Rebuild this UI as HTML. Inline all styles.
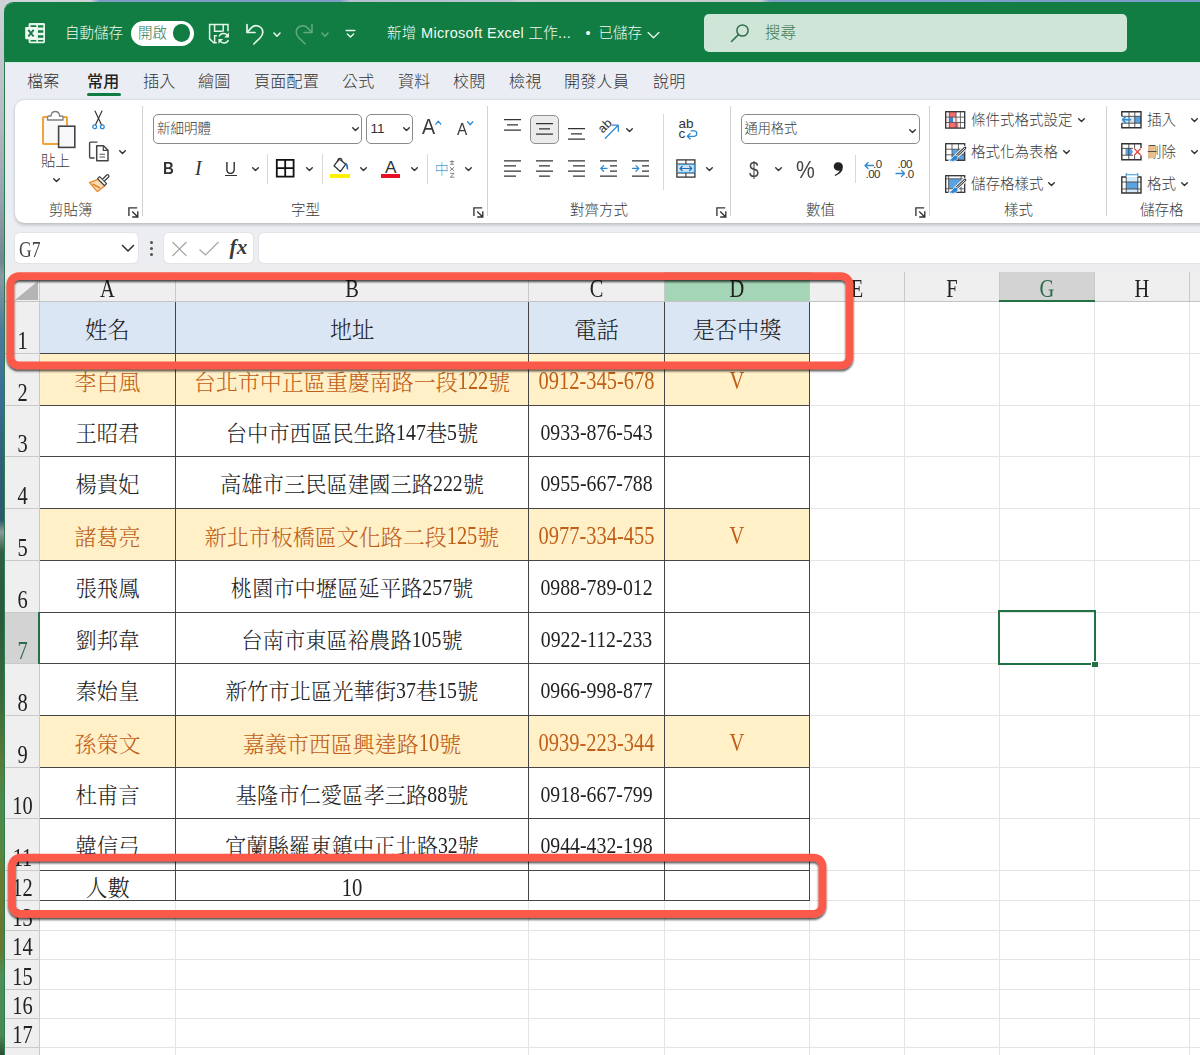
<!DOCTYPE html>
<html lang="zh-Hant"><head><meta charset="utf-8"><title>Excel</title>
<style>
*{box-sizing:border-box;margin:0;padding:0}
html,body{width:1200px;height:1055px;overflow:hidden}
body{position:relative;font-family:"Liberation Sans","Noto Sans CJK TC","Noto Sans CJK SC",sans-serif;color:#333;background:#6d8fb5}
.abs{position:absolute}
#deskL{position:absolute;left:0;top:0;width:6px;height:1055px;background:linear-gradient(180deg,#d0d4d9 0px,#b4bbc2 120px,#97a2aa 200px,#74858e 262px,#8a9aa5 275px,#4a7a9c 330px,#3a6e96 400px,#2f6078 460px,#2a5a6a 520px,#8d9a9a 532px,#2f5f40 552px,#2a5a3c 620px,#3b6b3a 700px,#5a7a35 760px,#4a8a4a 800px,#55873f 850px,#6b7a2f 880px,#66782f 950px,#4f8f55 975px,#4a8a50 1035px,#2d4a35 1055px)}
#deskT{position:absolute;left:0;top:0;width:1200px;height:8px;background:linear-gradient(90deg,#d2d5da 0px,#cfd3d8 90px,#7c9cc5 100px,#7d9dc6 340px,#b5c0d0 350px,#bcc5d0 510px,#cdd0d2 520px,#c9cdd0 760px,#7fa0c8 770px,#7a9cc8 1200px)}
#win{position:absolute;left:4px;top:3px;width:1210px;height:1070px;background:#eaedf3;border-top-left-radius:9px;overflow:hidden}
#title{position:absolute;left:0;top:0;width:100%;height:60px;background:#117d42;border-bottom:1px solid #cfeede}
.tt{position:absolute;color:#f0faf3;font-size:14.5px;line-height:20px;white-space:nowrap;font-weight:300}
.mi{position:absolute;top:67px;font-size:16px;line-height:24px;color:#333;white-space:nowrap;font-weight:300;letter-spacing:.3px}
#ribbon{position:absolute;left:11px;top:97px;width:1210px;height:122.5px;background:#fff;border-radius:9px;box-shadow:0 1.5px 3.5px rgba(0,0,0,.2),0 0 1px rgba(0,0,0,.12)}
.rl{position:absolute;font-size:14.5px;line-height:20px;color:#3a3a3a;white-space:nowrap;font-weight:300}
.gsep{position:absolute;top:6px;width:1px;height:110px;background:#d2d2d2}
.ssep{position:absolute;width:1px;background:#d8d8d8}
.box{position:absolute;border:1px solid #8a8a8a;border-radius:5px;background:#fff}
.fb{position:absolute;top:230px;height:30px;background:#fff;border-radius:5px;box-shadow:0 0 0 1px #e3e4e7}
#sheet{position:absolute;left:1px;top:269px;width:1200px;height:800px;background:#fff;font-family:"Liberation Serif","Noto Serif CJK TC","Noto Serif CJK SC",serif}
.ch{position:absolute;top:0;height:29px;background:#efefef;border-right:1px solid #c9c9c9;font-size:22px;line-height:36px;text-align:center;color:#222}
.rh{position:absolute;left:0;width:34px;background:#efefef;border-bottom:1px solid #c9c9c9;font-size:22px;color:#222;text-align:center}
.rh>span{position:absolute;left:1px;right:0;bottom:-2px;line-height:26px}
.c{position:absolute;font-size:22px;text-align:center;white-space:nowrap;color:#222;font-weight:300}
.d{display:inline-block;font-size:.93em;transform:scaleY(1.2);transform-origin:50% 72%;font-family:'Liberation Serif',serif}
.gl{position:absolute;background:#e1e1e1}
.bl{position:absolute;background:#4a4a4a}
svg{position:absolute;overflow:visible}
</style></head>
<body>
<div id="deskT"></div><div id="deskL"></div>
<div class="abs" style="left:4px;top:2px;width:1200px;height:14px;background:#117d42;border-top-left-radius:9px"></div>
<div id="win">
<div id="title">
<svg style="left:19.5px;top:19px" width="22" height="22" viewBox="0 0 22 22"><rect x="4.6" y="1.1" width="16.4" height="20.1" rx="1.4" fill="#e4f5ea"/><path d="M6.6 3.2H12.3V5H6.6ZM14 3.2H19.3V5.6H14ZM14 8.2H19.3V10.7H14ZM14 13.2H19.3V15.7H14ZM6.6 17.9H12.3V19.5H6.6ZM14 18.1H19.3V19.5H14Z" fill="#117d42"/><rect x="1.2" y="5" width="11.4" height="12.2" rx="0.9" fill="#f2faf5"/><path d="M4.3 7.9L9.6 14.5M9.6 7.9L4.3 14.5" stroke="#187a46" stroke-width="1.9" fill="none"/></svg>
<div class="tt" style="left:61px;top:20px">自動儲存</div>
<div class="abs" style="left:126.5px;top:17.5px;width:63px;height:25px;border-radius:12.5px;background:#fff"></div>
<div class="tt" style="left:134px;top:20px;color:#2f7a52;font-size:14.5px">開啟</div>
<div class="abs" style="left:169px;top:21.4px;width:17.2px;height:17.2px;border-radius:50%;background:#117d42"></div>
<svg style="left:204px;top:20px" width="22" height="22" viewBox="0 0 22 22" fill="none" stroke="#e4f5ea" stroke-width="1.5" stroke-linejoin="miter" stroke-linecap="butt"><path d="M8.8 19.7H5.8L1.6 15.8V1.6H20V8.2"/><path d="M6.6 1.6V8.3H15.2V1.6"/><path d="M8.9 12.8H6.6V19.7"/><circle cx="15.7" cy="15.2" r="6.6" fill="#117d42" stroke="none"/><path d="M11 13.6A4.9 4.9 0 0 1 19.6 12.6M20.4 16.9A4.9 4.9 0 0 1 11.8 17.9" stroke-width="1.4"/><path d="M21 9.6V14.4H16.2ZM10.4 20.8V16H15.2Z" fill="#e4f5ea" stroke="none"/></svg>
<svg style="left:241px;top:19px" width="20" height="24" viewBox="0 0 20 24" fill="none" stroke="#e4f5ea" stroke-width="1.7" stroke-linejoin="round" stroke-linecap="round"><path d="M2 2.5V10.5H10"/><path d="M2.3 10.2L6.5 5.7A6.6 6.6 0 0 1 17.8 10.3Q17.8 13.2 15 16L8.8 22"/></svg>
<svg style="left:268.5px;top:28.5px" width="8" height="6" viewBox="0 0 8 6"><path d="M1 1L4 4.2L7 1" fill="none" stroke="#e4f5ea" stroke-width="1.6" stroke-linecap="round" stroke-linejoin="round"/></svg>
<svg style="left:290px;top:19px;opacity:.38" width="20" height="24" viewBox="0 0 20 24" fill="none" stroke="#e4f5ea" stroke-width="1.5" stroke-linejoin="round" stroke-linecap="round"><path d="M18 2.5V10.5H10"/><path d="M17.7 10.2L13.5 5.7A6.6 6.6 0 0 0 2.2 10.3Q2.2 13.2 5 16L11.2 22"/></svg>
<svg style="left:316.5px;top:28.5px;opacity:.38" width="8" height="6" viewBox="0 0 8 6"><path d="M1 1L4 4.2L7 1" fill="none" stroke="#e4f5ea" stroke-width="1.6" stroke-linecap="round" stroke-linejoin="round"/></svg>
<svg style="left:341px;top:25px" width="11" height="11" viewBox="0 0 11 11" fill="none" stroke="#e4f5ea" stroke-width="1.5" stroke-linecap="round" stroke-linejoin="round"><path d="M1.2 2.4H9.8M2.4 6L5.5 9L8.6 6"/></svg>
<div class="tt" style="left:383px;top:20px;letter-spacing:.32px">新增 Microsoft Excel 工作...</div>
<div class="tt" style="left:581.5px;top:20px">•</div><div class="tt" style="left:594.5px;top:20px">已儲存</div>
<svg style="left:643px;top:27.5px" width="13" height="9" viewBox="0 0 14 9"><path d="M1.2 1.2L7 7L12.8 1.2" fill="none" stroke="#e4f5ea" stroke-width="1.5" stroke-linecap="round" stroke-linejoin="round"/></svg>
<div class="abs" style="left:700px;top:11px;width:423px;height:38px;border-radius:5px;background:#cfe5d7"></div>
<svg style="left:726px;top:20px" width="20" height="20" viewBox="0 0 20 20" fill="none" stroke="#2f6f4b" stroke-width="1.5" stroke-linecap="round"><circle cx="12.5" cy="7.5" r="5.6"/><path d="M8.4 11.6L1.5 18.5"/></svg>
<div class="tt" style="left:761px;top:20px;color:#3b7a55;font-size:15.5px">搜尋</div>
</div>
<div class="mi" style="left:23px;">檔案</div>
<div class="mi" style="left:83px;font-weight:500;color:#222;">常用</div>
<div class="mi" style="left:139px;">插入</div>
<div class="mi" style="left:194px;">繪圖</div>
<div class="mi" style="left:250px;">頁面配置</div>
<div class="mi" style="left:338px;">公式</div>
<div class="mi" style="left:394px;">資料</div>
<div class="mi" style="left:449px;">校閱</div>
<div class="mi" style="left:505px;">檢視</div>
<div class="mi" style="left:560px;">開發人員</div>
<div class="mi" style="left:649px;">說明</div>
<div class="abs" style="left:83px;top:90px;width:34px;height:3px;border-radius:2px;background:#107c41"></div>
<div class="abs" style="left:1px;top:215px;width:1210px;height:54px;background:linear-gradient(180deg,#eceef1 0,#ecedf0 45px,#eeeeef 54px)"></div>
<div id="ribbon">
<svg style="left:26px;top:10px" width="36" height="40" viewBox="0 0 36 40" ><path d="M7 7H2.9Q2 7 2 7.9V34Q2 34.9 2.9 34.9H17V16H26V7.9Q26 7 25.1 7H21" fill="#fafafa" stroke="none"/>
<path d="M7 7H2.9Q2 7 2 7.9V33.1Q2 34 2.9 34H17" fill="none" stroke="#f2a33a" stroke-width="2"/><path d="M21 7H25.1Q26 7 26 7.9V15.5" fill="none" stroke="#f2a33a" stroke-width="2"/>
<path d="M6.6 10V7.2Q6.6 6 7.8 6H10Q10.4 1.5 14.3 1.5Q18.2 1.5 18.6 6H20.8Q22 6 22 7.2V10Z" fill="#fff" stroke="#808080" stroke-width="1.3" stroke-linejoin="round"/>
<rect x="17.6" y="16.2" width="16.2" height="21.2" fill="#f8f8fb" stroke="#444" stroke-width="1.6"/></svg>
<div class="rl" style="left:26px;top:51px;">貼上</div>
<svg style="left:38.3px;top:78px" width="7" height="4.5" viewBox="0 0 7 4.5"><path d="M0.7 0.7L3.5 3.5L6.3 0.7" fill="none" stroke="#333" stroke-width="1.4" stroke-linecap="round" stroke-linejoin="round"/></svg>
<svg style="left:76px;top:10px" width="15" height="22" viewBox="0 0 15 22" ><path d="M4 1L10.6 15M11 1L4.4 15" fill="none" stroke="#333" stroke-width="1.15" stroke-linecap="round"/><circle cx="3.7" cy="16.7" r="1.9" fill="none" stroke="#2e8bd8" stroke-width="1.3"/><circle cx="11.3" cy="16.7" r="1.9" fill="none" stroke="#2e8bd8" stroke-width="1.3"/></svg>
<svg style="left:73px;top:41px" width="22" height="22" viewBox="0 0 22 22" ><path d="M6.5 17H2.5Q1.6 17 1.6 16.1V2Q1.6 1.1 2.5 1.1H9.5" fill="none" stroke="#444" stroke-width="1.4" stroke-linejoin="round"/><path d="M8.7 4.7H15.5L20 9.2V19.8H8.7Z" fill="#fff" stroke="#444" stroke-width="1.5" stroke-linejoin="round"/><path d="M15.3 5V9.4H19.8" fill="none" stroke="#444" stroke-width="1.2"/><path d="M11.5 13.3H17M11.5 16H17" stroke="#555" stroke-width="1.1"/></svg>
<svg style="left:103.5px;top:49.69999999999999px" width="7" height="4.5" viewBox="0 0 7 4.5"><path d="M0.7 0.7L3.5 3.5L6.3 0.7" fill="none" stroke="#333" stroke-width="1.4" stroke-linecap="round" stroke-linejoin="round"/></svg>
<svg style="left:73px;top:72px" width="22" height="22" viewBox="0 0 22 22" ><path d="M1.5 10.6L10 7.4L16.6 14L9.4 19.6Z" fill="#fbdcb8" stroke="#e8872b" stroke-width="1.3" stroke-linejoin="round"/><path d="M4.5 12L12 16" stroke="#e8872b" stroke-width="1.6"/><path d="M9.6 6.6L11.6 4.6L18.6 11.6L16.6 13.6Z" fill="#fff" stroke="#444" stroke-width="1.3" stroke-linejoin="round"/><path d="M14.6 7.2L18.4 3.2Q19.6 2.1 20.6 3.1Q21.5 4.1 20.4 5.2L16.4 9" fill="#fff" stroke="#444" stroke-width="1.3" stroke-linejoin="round"/></svg>
<div class="rl" style="left:34px;top:100px;">剪貼簿</div>
<svg style="left:112.5px;top:106.5px" width="11" height="11" viewBox="0 0 11 11" ><path d="M0.9 9V0.9H9.2M4.2 4.5L9.8 10M9.8 4.3V10H4.2" fill="none" stroke="#333" stroke-width="1.35" stroke-linejoin="miter"/></svg>
<div class="gsep" style="left:127px"></div>
<div class="box" style="left:138px;top:14px;width:209px;height:30px"></div>
<div class="rl" style="left:142px;top:19px;font-size:13.5px;color:#333">新細明體</div>
<svg style="left:337px;top:27.299999999999997px" width="7" height="4.5" viewBox="0 0 7 4.5"><path d="M0.7 0.7L3.5 3.5L6.3 0.7" fill="none" stroke="#333" stroke-width="1.4" stroke-linecap="round" stroke-linejoin="round"/></svg>
<div class="box" style="left:351px;top:14px;width:47px;height:30px"></div>
<div class="rl" style="left:355.5px;top:18.5px;font-size:13.5px;color:#333;font-weight:400">11</div>
<svg style="left:387.5px;top:27.299999999999997px" width="7" height="4.5" viewBox="0 0 7 4.5"><path d="M0.7 0.7L3.5 3.5L6.3 0.7" fill="none" stroke="#333" stroke-width="1.4" stroke-linecap="round" stroke-linejoin="round"/></svg>
<div class="rl" style="left:407.3px;top:12.299999999999997px;font-size:21.2px;line-height:30px;color:#3a3a3a;font-weight:400;transform:scaleX(.93);transform-origin:0 0">A</div>
<svg style="left:420px;top:20px" width="7" height="5" viewBox="0 0 7 5" ><path d="M0.8 4.2L3.3 1.2L5.8 4.2" fill="none" stroke="#2e8bd0" stroke-width="1.3" stroke-linecap="round" stroke-linejoin="round"/></svg>
<div class="rl" style="left:441.6px;top:16.299999999999997px;font-size:16.2px;line-height:26px;color:#3a3a3a;font-weight:400;transform:scaleX(.95);transform-origin:0 0">A</div>
<svg style="left:451.7px;top:20.5px" width="7" height="5" viewBox="0 0 7 5" ><path d="M0.6 0.8L3.2 3.8L5.8 0.8" fill="none" stroke="#2e8bd0" stroke-width="1.3" stroke-linecap="round" stroke-linejoin="round"/></svg>
<div class="rl" style="left:148px;top:56.599999999999994px;font-size:16.7px;line-height:24px;font-weight:700;color:#333;transform:scaleX(.9);transform-origin:0 0">B</div>
<div class="rl" style="left:180px;top:56px;font-size:17px;line-height:24px;font-style:italic;color:#333;font-family:'Liberation Serif',serif;font-size:20px">I</div>
<div class="rl" style="left:210.4px;top:56.599999999999994px;font-size:16.7px;line-height:24px;color:#333;font-weight:400;transform:scaleX(.92);transform-origin:0 0">U</div>
<div class="abs" style="left:210.3px;top:74.6px;width:11.4px;height:1.3px;background:#333"></div>
<svg style="left:236.5px;top:67.30000000000001px" width="7" height="4.5" viewBox="0 0 7 4.5"><path d="M0.7 0.7L3.5 3.5L6.3 0.7" fill="none" stroke="#333" stroke-width="1.4" stroke-linecap="round" stroke-linejoin="round"/></svg>
<div class="ssep" style="left:252px;top:54px;height:30px"></div>
<svg style="left:260px;top:58px" width="20" height="20" viewBox="0 0 20 20" ><path d="M1.8 1.8H18.6V18.6H1.8ZM10.2 1.8V18.6M1.8 10.2H18.6" fill="none" stroke="#111" stroke-width="1.8"/></svg>
<svg style="left:291px;top:67.30000000000001px" width="7" height="4.5" viewBox="0 0 7 4.5"><path d="M0.7 0.7L3.5 3.5L6.3 0.7" fill="none" stroke="#333" stroke-width="1.4" stroke-linecap="round" stroke-linejoin="round"/></svg>
<div class="ssep" style="left:307px;top:54px;height:30px"></div>
<svg style="left:316px;top:57px" width="20" height="16" viewBox="0 0 20 16" ><path d="M7.7 2.5L3 8.8L9.3 14.6L14.6 7.3L10 3.2Z" fill="#fff" stroke="#333" stroke-width="1.3" stroke-linejoin="round"/><path d="M7 4.5Q6.5 1.2 9 1.2Q11 1.2 11 4" fill="none" stroke="#333" stroke-width="1.1"/><path d="M14.3 5.2Q17.6 6.5 17.2 13Q15 12 15.2 9Q15.2 7 14.3 5.2Z" fill="#1e6fbf"/></svg>
<div class="abs" style="left:315px;top:73.80000000000001px;width:19.7px;height:4.4px;background:#fff100"></div>
<svg style="left:345px;top:67.30000000000001px" width="7" height="4.5" viewBox="0 0 7 4.5"><path d="M0.7 0.7L3.5 3.5L6.3 0.7" fill="none" stroke="#333" stroke-width="1.4" stroke-linecap="round" stroke-linejoin="round"/></svg>
<div class="rl" style="left:370px;top:54.5px;font-size:17.3px;line-height:24px;color:#333;font-weight:400">A</div>
<div class="abs" style="left:365.7px;top:73.80000000000001px;width:19.8px;height:4.4px;background:#e81123"></div>
<svg style="left:395.5px;top:67.30000000000001px" width="7" height="4.5" viewBox="0 0 7 4.5"><path d="M0.7 0.7L3.5 3.5L6.3 0.7" fill="none" stroke="#333" stroke-width="1.4" stroke-linecap="round" stroke-linejoin="round"/></svg>
<div class="ssep" style="left:411.5px;top:54px;height:30px"></div>
<div class="rl" style="left:419.7px;top:57px;font-size:14px;line-height:24px;color:#4a9fd0">中</div>
<svg style="left:433.5px;top:60px" width="6" height="18" viewBox="0 0 6 18" ><path d="M3 0.3V4.2M0.8 1.5H5.2M1 4.2H5M0.8 7L5.2 11M5.2 7L0.8 11M1 13.3H5L1.3 17.2H5.4" fill="none" stroke="#777" stroke-width=".9"/></svg>
<svg style="left:449.6px;top:67.30000000000001px" width="7" height="4.5" viewBox="0 0 7 4.5"><path d="M0.7 0.7L3.5 3.5L6.3 0.7" fill="none" stroke="#333" stroke-width="1.4" stroke-linecap="round" stroke-linejoin="round"/></svg>
<div class="rl" style="left:276px;top:100px;">字型</div>
<svg style="left:457.5px;top:106.5px" width="11" height="11" viewBox="0 0 11 11" ><path d="M0.9 9V0.9H9.2M4.2 4.5L9.8 10M9.8 4.3V10H4.2" fill="none" stroke="#333" stroke-width="1.35" stroke-linejoin="miter"/></svg>
<div class="gsep" style="left:472px"></div>
<svg style="left:489px;top:19px" width="17" height="13" viewBox="0 0 17 13" ><path d="M0 0.7H17M3 5.9H14M0 11.1H17" stroke="#333" stroke-width="1.25"/></svg>
<div class="abs" style="left:515px;top:14.5px;width:29px;height:29px;border:1px solid #8f8f8f;border-radius:5px;background:#ebebeb"></div>
<svg style="left:521px;top:23px" width="17" height="13" viewBox="0 0 17 13" ><path d="M0 0.7H17M3 5.9H14M0 11.1H17" stroke="#333" stroke-width="1.25"/></svg>
<svg style="left:553px;top:27.5px" width="17" height="13" viewBox="0 0 17 13" ><path d="M0 0.7H17M3 5.9H14M0 11.1H17" stroke="#333" stroke-width="1.25"/></svg>
<div class="rl" style="left:582.5px;top:16px;font-size:12.5px;line-height:20px;color:#333;font-weight:400;transform:rotate(-45deg);transform-origin:50% 50%">ab</div>
<svg style="left:589px;top:23.5px" width="16" height="16" viewBox="0 0 16 16" ><path d="M1.3 14.2L14 1.5M8.3 1.2H14.3V7.2" fill="none" stroke="#2e8bd0" stroke-width="1.3" stroke-linecap="round" stroke-linejoin="round"/></svg>
<svg style="left:610.8px;top:27.799999999999997px" width="7" height="4.5" viewBox="0 0 7 4.5"><path d="M0.7 0.7L3.5 3.5L6.3 0.7" fill="none" stroke="#333" stroke-width="1.4" stroke-linecap="round" stroke-linejoin="round"/></svg>
<svg style="left:489px;top:60px" width="17" height="17" viewBox="0 0 17 17" ><path d="M0 0.8H17M0 5.9H12M0 11H17M0 16.1H12" stroke="#333" stroke-width="1.25"/></svg>
<svg style="left:521px;top:60px" width="17" height="17" viewBox="0 0 17 17" ><path d="M0 0.8H17M3 5.9H14M0 11H17M3 16.1H14" stroke="#333" stroke-width="1.25"/></svg>
<svg style="left:553px;top:60px" width="17" height="17" viewBox="0 0 17 17" ><path d="M0 0.8H17M5 5.9H17M0 11H17M5 16.1H17" stroke="#333" stroke-width="1.25"/></svg>
<svg style="left:585px;top:60px" width="17" height="17" viewBox="0 0 17 17" ><path d="M0 0.8H17M10 5.9H17M10 11H17M0 16.1H17" stroke="#333" stroke-width="1.25"/><path d="M7 8.4H0.8M3.6 5.6L0.8 8.4L3.6 11.2" fill="none" stroke="#2e8bd0" stroke-width="1.3" stroke-linejoin="round" stroke-linecap="round"/></svg>
<svg style="left:617px;top:60px" width="17" height="17" viewBox="0 0 17 17" ><path d="M0 0.8H17M10 5.9H17M10 11H17M0 16.1H17" stroke="#333" stroke-width="1.25"/><path d="M0.5 8.4H6.8M4 5.6L6.8 8.4L4 11.2" fill="none" stroke="#2e8bd0" stroke-width="1.3" stroke-linejoin="round" stroke-linecap="round"/></svg>
<div class="ssep" style="left:648px;top:14px;height:76px"></div>
<div class="rl" style="left:663.5px;top:16px;font-size:13.5px;line-height:16px;color:#333;font-weight:400">ab</div>
<div class="rl" style="left:663.5px;top:25.5px;font-size:13.5px;line-height:16px;color:#333;font-weight:400">c</div>
<svg style="left:670.5px;top:29.5px" width="12" height="10" viewBox="0 0 12 10" ><path d="M5 0.8H8.3Q10.8 1 10.8 3.6Q10.8 6.2 8.3 6.3H1.5M4.2 3.6L1.3 6.3L4.2 9" fill="none" stroke="#2e8bd0" stroke-width="1.3" stroke-linejoin="round" stroke-linecap="round"/></svg>
<svg style="left:660.5px;top:58.5px" width="20" height="19" viewBox="0 0 20 19" ><rect x="0.9" y="0.9" width="18" height="17.2" fill="#fff" stroke="#333" stroke-width="1.3"/><path d="M0.9 5H18.9M0.9 14H18.9M9.9 0.9V5M9.9 14V18.1" stroke="#333" stroke-width="1.1"/><rect x="1.5" y="5.6" width="16.8" height="7.8" fill="#cfe6f8" stroke="#3a96d6" stroke-width="1"/><path d="M4 9.5H15.8M6.3 7.3L4 9.5L6.3 11.7M13.5 7.3L15.8 9.5L13.5 11.7" fill="none" stroke="#1f6fb2" stroke-width="1.2" stroke-linejoin="round" stroke-linecap="round"/></svg>
<svg style="left:690.6px;top:67.30000000000001px" width="7" height="4.5" viewBox="0 0 7 4.5"><path d="M0.7 0.7L3.5 3.5L6.3 0.7" fill="none" stroke="#333" stroke-width="1.4" stroke-linecap="round" stroke-linejoin="round"/></svg>
<div class="rl" style="left:555px;top:100px;">對齊方式</div>
<svg style="left:700.5px;top:106.5px" width="11" height="11" viewBox="0 0 11 11" ><path d="M0.9 9V0.9H9.2M4.2 4.5L9.8 10M9.8 4.3V10H4.2" fill="none" stroke="#333" stroke-width="1.35" stroke-linejoin="miter"/></svg>
<div class="gsep" style="left:715px"></div>
<div class="box" style="left:726px;top:14px;width:179px;height:30px"></div>
<div class="rl" style="left:729.5px;top:19.299999999999997px;font-size:13.2px;color:#333">通用格式</div>
<svg style="left:893.7px;top:28.5px" width="7" height="4.5" viewBox="0 0 7 4.5"><path d="M0.7 0.7L3.5 3.5L6.3 0.7" fill="none" stroke="#333" stroke-width="1.4" stroke-linecap="round" stroke-linejoin="round"/></svg>
<div class="rl" style="left:734.3px;top:55px;font-size:22px;line-height:30px;color:#444;font-weight:400;transform:scaleX(.8);transform-origin:0 0">$</div>
<svg style="left:760px;top:67.30000000000001px" width="7" height="4.5" viewBox="0 0 7 4.5"><path d="M0.7 0.7L3.5 3.5L6.3 0.7" fill="none" stroke="#333" stroke-width="1.4" stroke-linecap="round" stroke-linejoin="round"/></svg>
<div class="rl" style="left:781px;top:54.5px;font-size:23px;line-height:30px;color:#444;font-weight:400;transform:scaleX(.92);transform-origin:0 0">%</div>
<svg style="left:817px;top:61px" width="12" height="16" viewBox="0 0 12 16" ><path d="M6.4 1.2A4.3 4.3 0 1 0 8 9.3Q6.8 12.3 2.6 14.1L3.1 15Q10.9 12.4 10.9 5.8A4.5 4.5 0 0 0 6.4 1.2Z" fill="#222"/></svg>
<div class="ssep" style="left:840px;top:54.5px;height:28.5px"></div>
<svg style="left:848.5px;top:60.5px" width="12" height="9" viewBox="0 0 12 9" ><path d="M1 4.5H9.5M4 1.5L1 4.5L4 7.5" fill="none" stroke="#2e8bd0" stroke-width="1.3" stroke-linejoin="round" stroke-linecap="round"/></svg>
<div class="rl" style="left:858px;top:56.5px;font-size:11.5px;line-height:14px;color:#333;letter-spacing:-.5px;font-weight:400">.0</div>
<div class="rl" style="left:850.5px;top:66.80000000000001px;font-size:11.5px;line-height:14px;color:#333;letter-spacing:-.5px;font-weight:400">.00</div>
<div class="rl" style="left:882.5px;top:56.5px;font-size:11.5px;line-height:14px;color:#333;letter-spacing:-.5px;font-weight:400">.00</div>
<svg style="left:880px;top:68.80000000000001px" width="12" height="9" viewBox="0 0 12 9" ><path d="M1 4.5H9.5M6.5 1.5L9.5 4.5L6.5 7.5" fill="none" stroke="#2e8bd0" stroke-width="1.3" stroke-linejoin="round" stroke-linecap="round"/></svg>
<div class="rl" style="left:890px;top:66.80000000000001px;font-size:11.5px;line-height:14px;color:#333;letter-spacing:-.5px;font-weight:400">.0</div>
<div class="rl" style="left:791px;top:100px;">數值</div>
<svg style="left:899.5px;top:106.5px" width="11" height="11" viewBox="0 0 11 11" ><path d="M0.9 9V0.9H9.2M4.2 4.5L9.8 10M9.8 4.3V10H4.2" fill="none" stroke="#333" stroke-width="1.35" stroke-linejoin="miter"/></svg>
<div class="gsep" style="left:914px"></div>
<svg style="left:929.5px;top:10.5px" width="21" height="18" viewBox="0 0 21 18" ><rect x="0.7" y="0.7" width="19" height="16.4" fill="#fff"/><rect x="4.4" y="0.7" width="6.6" height="5.4" fill="#f76d6d"/><rect x="4.4" y="6.1" width="3.8" height="5.4" fill="#3f7fd0"/><rect x="8.2" y="6.1" width="5" height="5.4" fill="#fde3e3"/><rect x="4.4" y="11.5" width="9" height="5.6" fill="#f76d6d"/><rect x="0.7" y="0.7" width="3.7" height="16.4" fill="#fdeeee"/><path d="M0.7 6.1H19.7M0.7 11.5H19.7M4.4 0.7V17.1M11 0.7V17.1M15.4 0.7V17.1" stroke="#555" stroke-width=".9"/><rect x="0.7" y="0.7" width="19" height="16.4" fill="none" stroke="#333" stroke-width="1.3"/></svg>
<div class="rl" style="left:956px;top:9.5px;">條件式格式設定</div>
<svg style="left:1063px;top:17.5px" width="7" height="4.5" viewBox="0 0 7 4.5"><path d="M0.7 0.7L3.5 3.5L6.3 0.7" fill="none" stroke="#333" stroke-width="1.4" stroke-linecap="round" stroke-linejoin="round"/></svg>
<svg style="left:929.5px;top:42.5px" width="22" height="20" viewBox="0 0 22 20" ><rect x="0.7" y="0.7" width="19" height="16.6" fill="#fff"/><rect x="7" y="6.2" width="12.7" height="11.1" fill="#5aa2e0"/><path d="M0.7 6.2H19.7M0.7 11.8H19.7M7 0.7V17.3M13.4 0.7V17.3" stroke="#555" stroke-width=".9"/><rect x="0.7" y="0.7" width="19" height="16.6" fill="none" stroke="#333" stroke-width="1.3"/><path d="M19.8 5.2L10.8 13.6" stroke="#fff" stroke-width="4.6" stroke-linecap="round"/><path d="M20 5L10.5 13.8" stroke="#333" stroke-width="2.6" stroke-linecap="round"/><path d="M19.7 5.3L11 13.4" stroke="#f4f4f4" stroke-width="1" stroke-linecap="round"/><path d="M11.8 12.2Q9.2 11.6 7.8 14Q6.5 16.5 3.4 17.2Q7.5 19.6 11 17.6Q13.6 15.8 12.9 13.3Z" fill="#2e86d2" stroke="#fff" stroke-width=".7"/></svg>
<div class="rl" style="left:956px;top:41.5px;">格式化為表格</div>
<svg style="left:1048px;top:49.5px" width="7" height="4.5" viewBox="0 0 7 4.5"><path d="M0.7 0.7L3.5 3.5L6.3 0.7" fill="none" stroke="#333" stroke-width="1.4" stroke-linecap="round" stroke-linejoin="round"/></svg>
<svg style="left:929.5px;top:74.5px" width="22" height="20" viewBox="0 0 22 20" ><rect x="0.7" y="0.7" width="19" height="16.6" fill="#fff"/><rect x="3.6" y="3.8" width="12.5" height="10" fill="#5aa2e0"/><path d="M0.7 3.8H19.7M0.7 13.8H19.7M3.6 0.7V17.3M16.1 0.7V17.3" stroke="#555" stroke-width=".9"/><rect x="0.7" y="0.7" width="19" height="16.6" fill="none" stroke="#333" stroke-width="1.3"/><path d="M19.8 5.2L10.8 13.6" stroke="#fff" stroke-width="4.6" stroke-linecap="round"/><path d="M20 5L10.5 13.8" stroke="#333" stroke-width="2.6" stroke-linecap="round"/><path d="M19.7 5.3L11 13.4" stroke="#f4f4f4" stroke-width="1" stroke-linecap="round"/><path d="M11.8 12.2Q9.2 11.6 7.8 14Q6.5 16.5 3.4 17.2Q7.5 19.6 11 17.6Q13.6 15.8 12.9 13.3Z" fill="#2e86d2" stroke="#fff" stroke-width=".7"/></svg>
<div class="rl" style="left:956px;top:73.5px;">儲存格樣式</div>
<svg style="left:1033px;top:81.5px" width="7" height="4.5" viewBox="0 0 7 4.5"><path d="M0.7 0.7L3.5 3.5L6.3 0.7" fill="none" stroke="#333" stroke-width="1.4" stroke-linecap="round" stroke-linejoin="round"/></svg>
<div class="rl" style="left:989px;top:100px;">樣式</div>
<div class="gsep" style="left:1091px"></div>
<svg style="left:1106px;top:10.5px" width="21" height="18" viewBox="0 0 21 18" ><rect x="0.8" y="0.8" width="19.2" height="16" fill="#fff"/><rect x="0.8" y="5.3" width="13" height="6.9" fill="#cfe7f9"/><rect x="13.8" y="5.3" width="6.2" height="6.9" fill="#5aa2e0"/><path d="M0.8 5.3H20M0.8 12.2H20M8 0.8V16.8M13.8 0.8V16.8" stroke="#444" stroke-width=".9"/><path d="M0.8 5.3V0.8H20V16.8H0.8V12.2" fill="none" stroke="#333" stroke-width="1.4"/><path d="M9.6 8.8H1.6M4.6 5.8L1.6 8.8L4.6 11.8" fill="none" stroke="#2e8bd0" stroke-width="1.4" stroke-linejoin="round" stroke-linecap="round"/></svg>
<div class="rl" style="left:1132px;top:9.5px;">插入</div>
<svg style="left:1176px;top:17.5px" width="7" height="4.5" viewBox="0 0 7 4.5"><path d="M0.7 0.7L3.5 3.5L6.3 0.7" fill="none" stroke="#333" stroke-width="1.4" stroke-linecap="round" stroke-linejoin="round"/></svg>
<svg style="left:1106px;top:42.5px" width="21" height="18" viewBox="0 0 21 18" ><rect x="0.8" y="0.8" width="19.2" height="16" fill="#fff"/><path d="M4.5 5.4H10L12 8.8L10 12.2H4.5Z" fill="#5aa2e0"/><path d="M0.8 5.4H12M0.8 12.2H12M7.8 0.8V16.8M13.6 0.8V5.4M13.6 12.2V16.8" stroke="#444" stroke-width=".9"/><path d="M20 5V0.8H0.8V16.8H20V12.6" fill="none" stroke="#333" stroke-width="1.4"/><path d="M13.7 6L19.3 11.8M19.3 6L13.7 11.8" stroke="#e5483d" stroke-width="1.3" stroke-linecap="round"/></svg>
<div class="rl" style="left:1132px;top:41.5px;">刪除</div>
<svg style="left:1176px;top:49.5px" width="7" height="4.5" viewBox="0 0 7 4.5"><path d="M0.7 0.7L3.5 3.5L6.3 0.7" fill="none" stroke="#333" stroke-width="1.4" stroke-linecap="round" stroke-linejoin="round"/></svg>
<svg style="left:1106px;top:72.5px" width="21" height="21" viewBox="0 0 21 21" ><path d="M5.2 1.7H16.8M5.2 0V3.6M16.8 0V3.6" stroke="#3a96d6" stroke-width="1.1" fill="none"/><rect x="0.8" y="4" width="19.2" height="16" fill="#fff"/><rect x="5.2" y="4" width="11.6" height="16" fill="#d5eafa"/><rect x="5.2" y="9" width="11.6" height="7" fill="#5aa2e0"/><path d="M0.8 9H20M0.8 16H20M5.2 4V20M16.8 4V20" stroke="#444" stroke-width=".9"/><path d="M5.2 4H0.8V20H20V4H16.8" fill="none" stroke="#333" stroke-width="1.4"/></svg>
<div class="rl" style="left:1132px;top:73.5px;">格式</div>
<svg style="left:1165.5px;top:81.5px" width="7" height="4.5" viewBox="0 0 7 4.5"><path d="M0.7 0.7L3.5 3.5L6.3 0.7" fill="none" stroke="#333" stroke-width="1.4" stroke-linecap="round" stroke-linejoin="round"/></svg>
<div class="rl" style="left:1125px;top:100px;">儲存格</div>
</div>
<div class="fb" style="left:11px;width:123px"></div>
<div class="abs" style="left:14.5px;top:234px;font-family:'Liberation Serif',serif;font-size:19.5px;line-height:28px;color:#444;transform:scale(.9,1.15);transform-origin:0 70%">G7</div>
<svg style="left:117px;top:241px" width="14" height="9" viewBox="0 0 14 9"><path d="M1.5 1.5L7 7L12.5 1.5" fill="none" stroke="#333" stroke-width="1.6" stroke-linecap="round" stroke-linejoin="round"/></svg>
<div class="abs" style="left:146px;top:238px;width:3px;height:3px;border-radius:50%;background:#555;box-shadow:0 6px 0 #555,0 12px 0 #555"></div>
<div class="fb" style="left:160px;width:89px"></div>
<svg style="left:167px;top:235.5px" width="80" height="20" viewBox="0 0 80 20"><path d="M1.5 3L15.5 17M15.5 3L1.5 17" stroke="#a6a6a6" stroke-width="1.2" fill="none"/><path d="M28.5 10.5L34.5 16L47.5 3" stroke="#a6a6a6" stroke-width="1.2" fill="none"/></svg>
<div class="abs" style="left:225.5px;top:229.5px;font-family:'Liberation Serif',serif;font-style:italic;font-weight:700;font-size:21px;line-height:28px;color:#3a3a3a;letter-spacing:.3px">fx</div>
<div class="fb" style="left:255px;width:960px"></div>
<div id="sheet">
<div class="abs" style="left:34px;top:29px;width:770px;height:52px;background:#dbe6f4;"></div>
<div class="abs" style="left:34px;top:81px;width:770px;height:52px;background:#fff0c8;"></div>
<div class="abs" style="left:34px;top:236px;width:770px;height:52px;background:#fff0c8;"></div>
<div class="abs" style="left:34px;top:443px;width:770px;height:52px;background:#fff0c8;"></div>
<div class="abs" style="left:170px;top:29px;width:1px;height:799px;background:#e4e4e4;"></div>
<div class="abs" style="left:523px;top:29px;width:1px;height:799px;background:#e4e4e4;"></div>
<div class="abs" style="left:659px;top:29px;width:1px;height:799px;background:#e4e4e4;"></div>
<div class="abs" style="left:804px;top:29px;width:1px;height:799px;background:#e4e4e4;"></div>
<div class="abs" style="left:899px;top:29px;width:1px;height:799px;background:#e4e4e4;"></div>
<div class="abs" style="left:994px;top:29px;width:1px;height:799px;background:#e4e4e4;"></div>
<div class="abs" style="left:1089px;top:29px;width:1px;height:799px;background:#e4e4e4;"></div>
<div class="abs" style="left:1184px;top:29px;width:1px;height:799px;background:#e4e4e4;"></div>
<div class="abs" style="left:1279px;top:29px;width:1px;height:799px;background:#e4e4e4;"></div>
<div class="abs" style="left:35px;top:81px;width:1260px;height:1px;background:#e4e4e4;"></div>
<div class="abs" style="left:35px;top:133px;width:1260px;height:1px;background:#e4e4e4;"></div>
<div class="abs" style="left:35px;top:184px;width:1260px;height:1px;background:#e4e4e4;"></div>
<div class="abs" style="left:35px;top:236px;width:1260px;height:1px;background:#e4e4e4;"></div>
<div class="abs" style="left:35px;top:288px;width:1260px;height:1px;background:#e4e4e4;"></div>
<div class="abs" style="left:35px;top:340px;width:1260px;height:1px;background:#e4e4e4;"></div>
<div class="abs" style="left:35px;top:391px;width:1260px;height:1px;background:#e4e4e4;"></div>
<div class="abs" style="left:35px;top:443px;width:1260px;height:1px;background:#e4e4e4;"></div>
<div class="abs" style="left:35px;top:495px;width:1260px;height:1px;background:#e4e4e4;"></div>
<div class="abs" style="left:35px;top:546px;width:1260px;height:1px;background:#e4e4e4;"></div>
<div class="abs" style="left:35px;top:598px;width:1260px;height:1px;background:#e4e4e4;"></div>
<div class="abs" style="left:35px;top:628px;width:1260px;height:1px;background:#e4e4e4;"></div>
<div class="abs" style="left:35px;top:658px;width:1260px;height:1px;background:#e4e4e4;"></div>
<div class="abs" style="left:35px;top:687px;width:1260px;height:1px;background:#e4e4e4;"></div>
<div class="abs" style="left:35px;top:717px;width:1260px;height:1px;background:#e4e4e4;"></div>
<div class="abs" style="left:35px;top:746px;width:1260px;height:1px;background:#e4e4e4;"></div>
<div class="abs" style="left:35px;top:775px;width:1260px;height:1px;background:#e4e4e4;"></div>
<div class="abs" style="left:35px;top:805px;width:1260px;height:1px;background:#e4e4e4;"></div>
<div class="abs" style="left:35px;top:834px;width:1260px;height:1px;background:#e4e4e4;"></div>
<div class="abs" style="left:34px;top:29px;width:1px;height:600px;background:#454545;"></div>
<div class="abs" style="left:170px;top:29px;width:1px;height:600px;background:#454545;"></div>
<div class="abs" style="left:523px;top:29px;width:1px;height:600px;background:#454545;"></div>
<div class="abs" style="left:659px;top:29px;width:1px;height:600px;background:#454545;"></div>
<div class="abs" style="left:804px;top:29px;width:1px;height:600px;background:#454545;"></div>
<div class="abs" style="left:34px;top:81px;width:771px;height:1px;background:#454545;"></div>
<div class="abs" style="left:34px;top:133px;width:771px;height:1px;background:#454545;"></div>
<div class="abs" style="left:34px;top:184px;width:771px;height:1px;background:#454545;"></div>
<div class="abs" style="left:34px;top:236px;width:771px;height:1px;background:#454545;"></div>
<div class="abs" style="left:34px;top:288px;width:771px;height:1px;background:#454545;"></div>
<div class="abs" style="left:34px;top:340px;width:771px;height:1px;background:#454545;"></div>
<div class="abs" style="left:34px;top:391px;width:771px;height:1px;background:#454545;"></div>
<div class="abs" style="left:34px;top:443px;width:771px;height:1px;background:#454545;"></div>
<div class="abs" style="left:34px;top:495px;width:771px;height:1px;background:#454545;"></div>
<div class="abs" style="left:34px;top:546px;width:771px;height:1px;background:#454545;"></div>
<div class="abs" style="left:34px;top:598px;width:771px;height:1px;background:#454545;"></div>
<div class="abs" style="left:34px;top:628px;width:771px;height:1px;background:#454545;"></div>
<div class="abs" style="left:0;top:0;width:1200px;height:29px;background:#efefef"></div>
<div class="ch" style="left:35px;width:136px;height:29px;"><span class="d">A</span></div>
<div class="ch" style="left:171px;width:353px;height:29px;"><span class="d">B</span></div>
<div class="ch" style="left:524px;width:136px;height:29px;"><span class="d">C</span></div>
<div class="ch" style="left:660px;width:145px;height:29px;background:#a3d5b6;"><span class="d">D</span></div>
<div class="ch" style="left:805px;width:95px;height:29px;"><span class="d">E</span></div>
<div class="ch" style="left:900px;width:95px;height:29px;"><span class="d">F</span></div>
<div class="ch" style="left:995px;width:95px;height:29px;background:#d3d3d3;color:#2f6b4a;"><span class="d">G</span></div>
<div class="ch" style="left:1090px;width:95px;height:29px;"><span class="d">H</span></div>
<div class="ch" style="left:1185px;width:95px;height:29px;"><span class="d">I</span></div>
<div class="abs" style="left:-5px;top:29px;width:1300px;height:1px;background:#c4c4c4;"></div>
<div class="abs" style="left:994px;top:28px;width:96px;height:2px;background:#217346;"></div>
<div class="abs" style="left:0;top:0;width:34px;height:29px;background:#efefef"></div>
<div class="abs" style="left:34px;top:0px;width:1px;height:29px;background:#c9c9c9;"></div>
<svg style="left:10px;top:9px" width="23" height="19" viewBox="0 0 23 19"><path d="M23 0V19H0Z" fill="#b4b4b4"/></svg>
<div class="rh" style="top:30px;height:52px;"><span><span class="d">1</span></span></div>
<div class="rh" style="top:82px;height:52px;"><span><span class="d">2</span></span></div>
<div class="rh" style="top:134px;height:51px;"><span><span class="d">3</span></span></div>
<div class="rh" style="top:185px;height:52px;"><span><span class="d">4</span></span></div>
<div class="rh" style="top:237px;height:52px;"><span><span class="d">5</span></span></div>
<div class="rh" style="top:289px;height:52px;"><span><span class="d">6</span></span></div>
<div class="rh" style="top:341px;height:51px;background:#d3d3d3;color:#2f6b4a;"><span><span class="d">7</span></span></div>
<div class="rh" style="top:392px;height:52px;"><span><span class="d">8</span></span></div>
<div class="rh" style="top:444px;height:52px;"><span><span class="d">9</span></span></div>
<div class="rh" style="top:496px;height:51px;"><span><span class="d">10</span></span></div>
<div class="rh" style="top:547px;height:52px;"><span><span class="d">11</span></span></div>
<div class="rh" style="top:599px;height:30px;"><span><span class="d">12</span></span></div>
<div class="rh" style="top:629px;height:30px;"><span><span class="d">13</span></span></div>
<div class="rh" style="top:659px;height:29px;"><span><span class="d">14</span></span></div>
<div class="rh" style="top:688px;height:30px;"><span><span class="d">15</span></span></div>
<div class="rh" style="top:718px;height:29px;"><span><span class="d">16</span></span></div>
<div class="rh" style="top:747px;height:29px;"><span><span class="d">17</span></span></div>
<div class="rh" style="top:776px;height:30px;"><span><span class="d">18</span></span></div>
<div class="rh" style="top:806px;height:29px;"><span><span class="d">19</span></span></div>
<div class="abs" style="left:34px;top:30px;width:1px;height:798px;background:#c9c9c9;"></div>
<div class="abs" style="left:33px;top:340px;width:2px;height:52px;background:#217346;"></div>
<div class="c" style="left:35px;top:30px;width:135px;height:52px;line-height:57px;color:#222;font-size:22.3px">姓名</div>
<div class="c" style="left:171px;top:30px;width:352px;height:52px;line-height:57px;color:#222;font-size:22.3px">地址</div>
<div class="c" style="left:524px;top:30px;width:135px;height:52px;line-height:57px;color:#222;font-size:22.3px">電話</div>
<div class="c" style="left:660px;top:30px;width:144px;height:52px;line-height:57px;color:#222;font-size:22.3px">是否中獎</div>
<div class="c" style="left:35px;top:82px;width:135px;height:52px;line-height:57px;color:#c05f18;font-size:22px">李白風</div>
<div class="c" style="left:171px;top:82px;width:352px;height:52px;line-height:57px;color:#c05f18;font-size:22px">台北市中正區重慶南路一段<span class="d">122</span>號</div>
<div class="c" style="left:524px;top:82px;width:135px;height:52px;line-height:57px;color:#c05f18;font-size:22px"><span class="d">0912-345-678</span></div>
<div class="c" style="left:660px;top:82px;width:144px;height:52px;line-height:57px;color:#c05f18;font-size:22px"><span class="d">V</span></div>
<div class="c" style="left:35px;top:134px;width:135px;height:51px;line-height:56px;color:#222;font-size:21.3px">王昭君</div>
<div class="c" style="left:171px;top:134px;width:352px;height:51px;line-height:56px;color:#222;font-size:21.3px">台中市西區民生路<span class="d">147</span>巷<span class="d">5</span>號</div>
<div class="c" style="left:524px;top:134px;width:135px;height:51px;line-height:56px;color:#222;font-size:21.3px"><span class="d">0933-876-543</span></div>
<div class="c" style="left:35px;top:185px;width:135px;height:52px;line-height:57px;color:#222;font-size:21.3px">楊貴妃</div>
<div class="c" style="left:171px;top:185px;width:352px;height:52px;line-height:57px;color:#222;font-size:21.3px">高雄市三民區建國三路<span class="d">222</span>號</div>
<div class="c" style="left:524px;top:185px;width:135px;height:52px;line-height:57px;color:#222;font-size:21.3px"><span class="d">0955-667-788</span></div>
<div class="c" style="left:35px;top:237px;width:135px;height:52px;line-height:57px;color:#c05f18;font-size:22px">諸葛亮</div>
<div class="c" style="left:171px;top:237px;width:352px;height:52px;line-height:57px;color:#c05f18;font-size:22px">新北市板橋區文化路二段<span class="d">125</span>號</div>
<div class="c" style="left:524px;top:237px;width:135px;height:52px;line-height:57px;color:#c05f18;font-size:22px"><span class="d">0977-334-455</span></div>
<div class="c" style="left:660px;top:237px;width:144px;height:52px;line-height:57px;color:#c05f18;font-size:22px"><span class="d">V</span></div>
<div class="c" style="left:35px;top:289px;width:135px;height:52px;line-height:57px;color:#222;font-size:21.3px">張飛鳳</div>
<div class="c" style="left:171px;top:289px;width:352px;height:52px;line-height:57px;color:#222;font-size:21.3px">桃園市中壢區延平路<span class="d">257</span>號</div>
<div class="c" style="left:524px;top:289px;width:135px;height:52px;line-height:57px;color:#222;font-size:21.3px"><span class="d">0988-789-012</span></div>
<div class="c" style="left:35px;top:341px;width:135px;height:51px;line-height:56px;color:#222;font-size:21.3px">劉邦韋</div>
<div class="c" style="left:171px;top:341px;width:352px;height:51px;line-height:56px;color:#222;font-size:21.3px">台南市東區裕農路<span class="d">105</span>號</div>
<div class="c" style="left:524px;top:341px;width:135px;height:51px;line-height:56px;color:#222;font-size:21.3px"><span class="d">0922-112-233</span></div>
<div class="c" style="left:35px;top:392px;width:135px;height:52px;line-height:57px;color:#222;font-size:21.3px">秦始皇</div>
<div class="c" style="left:171px;top:392px;width:352px;height:52px;line-height:57px;color:#222;font-size:21.3px">新竹市北區光華街<span class="d">37</span>巷<span class="d">15</span>號</div>
<div class="c" style="left:524px;top:392px;width:135px;height:52px;line-height:57px;color:#222;font-size:21.3px"><span class="d">0966-998-877</span></div>
<div class="c" style="left:35px;top:444px;width:135px;height:52px;line-height:57px;color:#c05f18;font-size:22px">孫策文</div>
<div class="c" style="left:171px;top:444px;width:352px;height:52px;line-height:57px;color:#c05f18;font-size:22px">嘉義市西區興達路<span class="d">10</span>號</div>
<div class="c" style="left:524px;top:444px;width:135px;height:52px;line-height:57px;color:#c05f18;font-size:22px"><span class="d">0939-223-344</span></div>
<div class="c" style="left:660px;top:444px;width:144px;height:52px;line-height:57px;color:#c05f18;font-size:22px"><span class="d">V</span></div>
<div class="c" style="left:35px;top:496px;width:135px;height:51px;line-height:56px;color:#222;font-size:21.3px">杜甫言</div>
<div class="c" style="left:171px;top:496px;width:352px;height:51px;line-height:56px;color:#222;font-size:21.3px">基隆市仁愛區孝三路<span class="d">88</span>號</div>
<div class="c" style="left:524px;top:496px;width:135px;height:51px;line-height:56px;color:#222;font-size:21.3px"><span class="d">0918-667-799</span></div>
<div class="c" style="left:35px;top:547px;width:135px;height:52px;line-height:57px;color:#222;font-size:21.3px">韓信弓</div>
<div class="c" style="left:171px;top:547px;width:352px;height:52px;line-height:57px;color:#222;font-size:21.3px">宜蘭縣羅東鎮中正北路<span class="d">32</span>號</div>
<div class="c" style="left:524px;top:547px;width:135px;height:52px;line-height:57px;color:#222;font-size:21.3px"><span class="d">0944-432-198</span></div>
<div class="c" style="left:35px;top:599px;width:135px;height:30px;line-height:35px;color:#222;font-size:22.3px">人數</div>
<div class="c" style="left:171px;top:599px;width:352px;height:30px;line-height:35px;color:#222;font-size:22.3px"><span class="d">10</span></div>
<div class="abs" style="left:993px;top:338px;width:98px;height:55px;background:transparent;border:2px solid #217346"></div>
<div class="abs" style="left:1086px;top:389px;width:7px;height:6px;background:#217346;border:1px solid #fff;border-right:0;border-bottom:0"></div>
</div>
<div class="abs" style="left:0;top:55px;width:1px;height:1010px;background:#2f7a52"></div>
</div>
<svg style="left:0;top:0;pointer-events:none" width="1200" height="1055" viewBox="0 0 1200 1055">
<defs><filter id="sh" x="-5%" y="-20%" width="110%" height="150%"><feGaussianBlur in="SourceAlpha" stdDeviation="1.1"/><feOffset dx="0" dy="1.8" result="o"/><feComponentTransfer><feFuncA type="linear" slope="0.7"/></feComponentTransfer><feMerge><feMergeNode/><feMergeNode in="SourceGraphic"/></feMerge></filter></defs>
<g filter="url(#sh)" fill="none" stroke="#fb5a4b" stroke-width="7.7">
<rect x="10.4" y="276.1" width="839.1" height="89.3" rx="8.5" ry="8.5"/>
<rect x="12" y="857.5" width="810.4" height="56.3" rx="8.5" ry="8.5"/>
</g>
</svg>
</body></html>
